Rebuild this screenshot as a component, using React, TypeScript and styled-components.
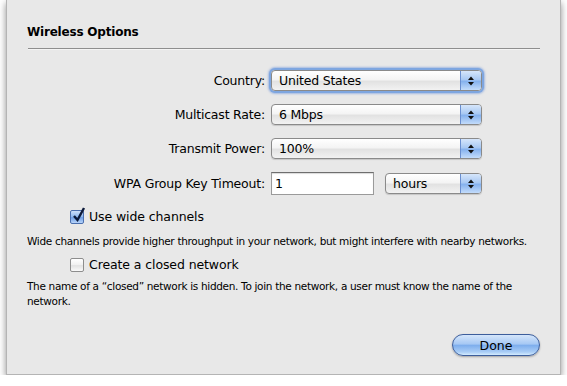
import styled, { createGlobalStyle } from "styled-components";

const GlobalStyle = createGlobalStyle`
  html, body {
    margin: 0;
    padding: 0;
    background: #ffffff;
  }
  body {
    font-family: "DejaVu Sans", "Liberation Sans", sans-serif;
    color: #000;
  }
`;

const Sheet = styled.div`
  box-sizing: border-box;
  margin: 0 6px;
  width: 555px;
  height: 375px;
  background: #e8e8e8;
  border: 1px solid #b4b4b4;
  border-top: none;
  box-shadow: 0 3px 7px rgba(0, 0, 0, 0.45);
  padding: 25px 20px 0 19px;
  display: flex;
  flex-direction: column;
`;

const Title = styled.div`
  font-size: 12px;
  font-weight: bold;
  letter-spacing: -0.2px;
  height: 17px;
  padding-left: 1px;
`;

const Separator = styled.div`
  margin-top: 6px;
  margin-left: 2px;
  height: 1px;
  background: #8e8e8e;
  border-bottom: 1px solid #f4f4f4;
`;

const Form = styled.div`
  margin-top: 20px;
  display: grid;
  grid-template-columns: 239px 1fr;
  column-gap: 6px;
  row-gap: 13px;
  align-items: center;
`;

const Label = styled.div`
  font-size: 12.5px;
  text-align: right;
  letter-spacing: -0.2px;
`;

const ControlRow = styled.div`
  display: flex;
  align-items: center;
  gap: 11px;
`;

const SelectBox = styled.div<{ $width: number; $focused?: boolean }>`
  box-sizing: border-box;
  width: ${(p) => p.$width}px;
  height: 21px;
  border: 1px solid #8a8a8a;
  border-radius: 4px;
  background: linear-gradient(#ffffff 0%, #f4f4f4 45%, #e2e2e2 55%, #f2f2f2 100%);
  display: flex;
  align-items: stretch;
  overflow: hidden;
  box-shadow: ${(p) =>
    p.$focused
      ? "0 0 0 2px #7ea6e0, 0 0 2px 3px rgba(110,150,220,0.55)"
      : "0 1px 1px rgba(0,0,0,0.15)"};
`;

const SelectText = styled.div`
  flex: 1;
  font-size: 12.5px;
  letter-spacing: -0.2px;
  padding-left: 7px;
  line-height: 19px;
`;

const Arrows = styled.div`
  width: 20px;
  border-left: 1px solid #6a8fd0;
  background: linear-gradient(#d6e6fb 0%, #a9c9f3 45%, #86b2ee 55%, #c3dcfb 100%);
  display: flex;
  align-items: center;
  justify-content: center;
`;

const TextField = styled.div`
  box-sizing: border-box;
  width: 103px;
  height: 23px;
  background: #fff;
  border: 1px solid #9a9a9a;
  border-top-color: #6e6e6e;
  box-shadow: inset 0 1px 1px rgba(0, 0, 0, 0.15);
  font-size: 12.5px;
  padding-left: 3px;
  line-height: 21px;
`;

const CheckRow = styled.label<{ $gapTop: number }>`
  display: flex;
  align-items: center;
  gap: 5px;
  margin-top: ${(p) => p.$gapTop}px;
  margin-left: 44px;
  font-size: 12.5px;
  letter-spacing: -0.1px;
`;

const CheckBox = styled.div<{ $checked?: boolean }>`
  box-sizing: border-box;
  width: 14px;
  height: 14px;
  border: 1px solid ${(p) => (p.$checked ? "#4b6fae" : "#8d8d8d")};
  border-radius: 2px;
  background: ${(p) =>
    p.$checked
      ? "linear-gradient(#cde0fa 0%, #8cb6ee 50%, #6e9fe6 55%, #b8d4fa 100%)"
      : "linear-gradient(#ffffff 0%, #f0f0f0 50%, #e2e2e2 55%, #fafafa 100%)"};
  position: relative;
`;

const CheckMark = styled.svg`
  position: absolute;
  left: 1px;
  top: -4px;
`;

const Note = styled.div<{ $gapTop: number; $nowrap?: boolean }>`
  margin-top: ${(p) => p.$gapTop}px;
  font-size: 10.5px;
  line-height: 15px;
  letter-spacing: -0.32px;
  padding-left: 1px;
  padding-right: 28px;
  white-space: ${(p) => (p.$nowrap ? "nowrap" : "normal")};
`;

const Footer = styled.div`
  margin-top: auto;
  margin-bottom: 18px;
  display: flex;
  justify-content: flex-end;
`;

const DoneButton = styled.button`
  box-sizing: border-box;
  width: 88px;
  height: 22px;
  border-radius: 11px;
  border: 1px solid #3d5e9c;
  background: linear-gradient(
    #d5e6fb 0%,
    #a6c8f4 45%,
    #7eaeed 52%,
    #a9cdf6 85%,
    #d4ecff 100%
  );
  box-shadow: 0 1px 2px rgba(0, 0, 0, 0.3);
  font-family: "DejaVu Sans", "Liberation Sans", sans-serif;
  font-size: 12.5px;
  color: #000;
  padding: 0;
`;

const Spacer = styled.div`
  height: 14px;
`;

function UpDown() {
  return (
    <svg width="6" height="10" viewBox="0 0 6 10">
      <path d="M3 0.5 L6 4 L0 4 Z" fill="#111" />
      <path d="M0 6 L6 6 L3 9.5 Z" fill="#111" />
    </svg>
  );
}

function Select(props: { value: string; width: number; focused?: boolean }) {
  return (
    <SelectBox $width={props.width} $focused={props.focused}>
      <SelectText>{props.value}</SelectText>
      <Arrows>
        <UpDown />
      </Arrows>
    </SelectBox>
  );
}

export default function App() {
  return (
    <>
      <GlobalStyle />
      <Sheet>
        <Title>Wireless Options</Title>
        <Separator />
        <Form>
          <Label>Country:</Label>
          <Select value="United States" width={211} focused />
          <Label>Multicast Rate:</Label>
          <Select value="6 Mbps" width={211} />
          <Label>Transmit Power:</Label>
          <Select value="100%" width={211} />
          <Label>WPA Group Key Timeout:</Label>
          <ControlRow>
            <TextField>1</TextField>
            <Select value="hours" width={97} />
          </ControlRow>
        </Form>
        <Spacer />
        <CheckRow $gapTop={0}>
          <CheckBox $checked>
            <CheckMark width="14" height="16" viewBox="0 0 14 16">
              <path
                d="M2 9 L5.5 13 L12 1"
                stroke="#0c1a3a"
                strokeWidth="2.4"
                fill="none"
              />
            </CheckMark>
          </CheckBox>
          Use wide channels
        </CheckRow>
        <Note $gapTop={10} $nowrap>
          Wide channels provide higher throughput in your network, but might
          interfere with nearby networks.
        </Note>
        <CheckRow $gapTop={8}>
          <CheckBox />
          Create a closed network
        </CheckRow>
        <Note $gapTop={7}>
          The name of a “closed” network is hidden. To join the network, a user
          must know the name of the network.
        </Note>
        <Footer>
          <DoneButton>Done</DoneButton>
        </Footer>
      </Sheet>
    </>
  );
}
